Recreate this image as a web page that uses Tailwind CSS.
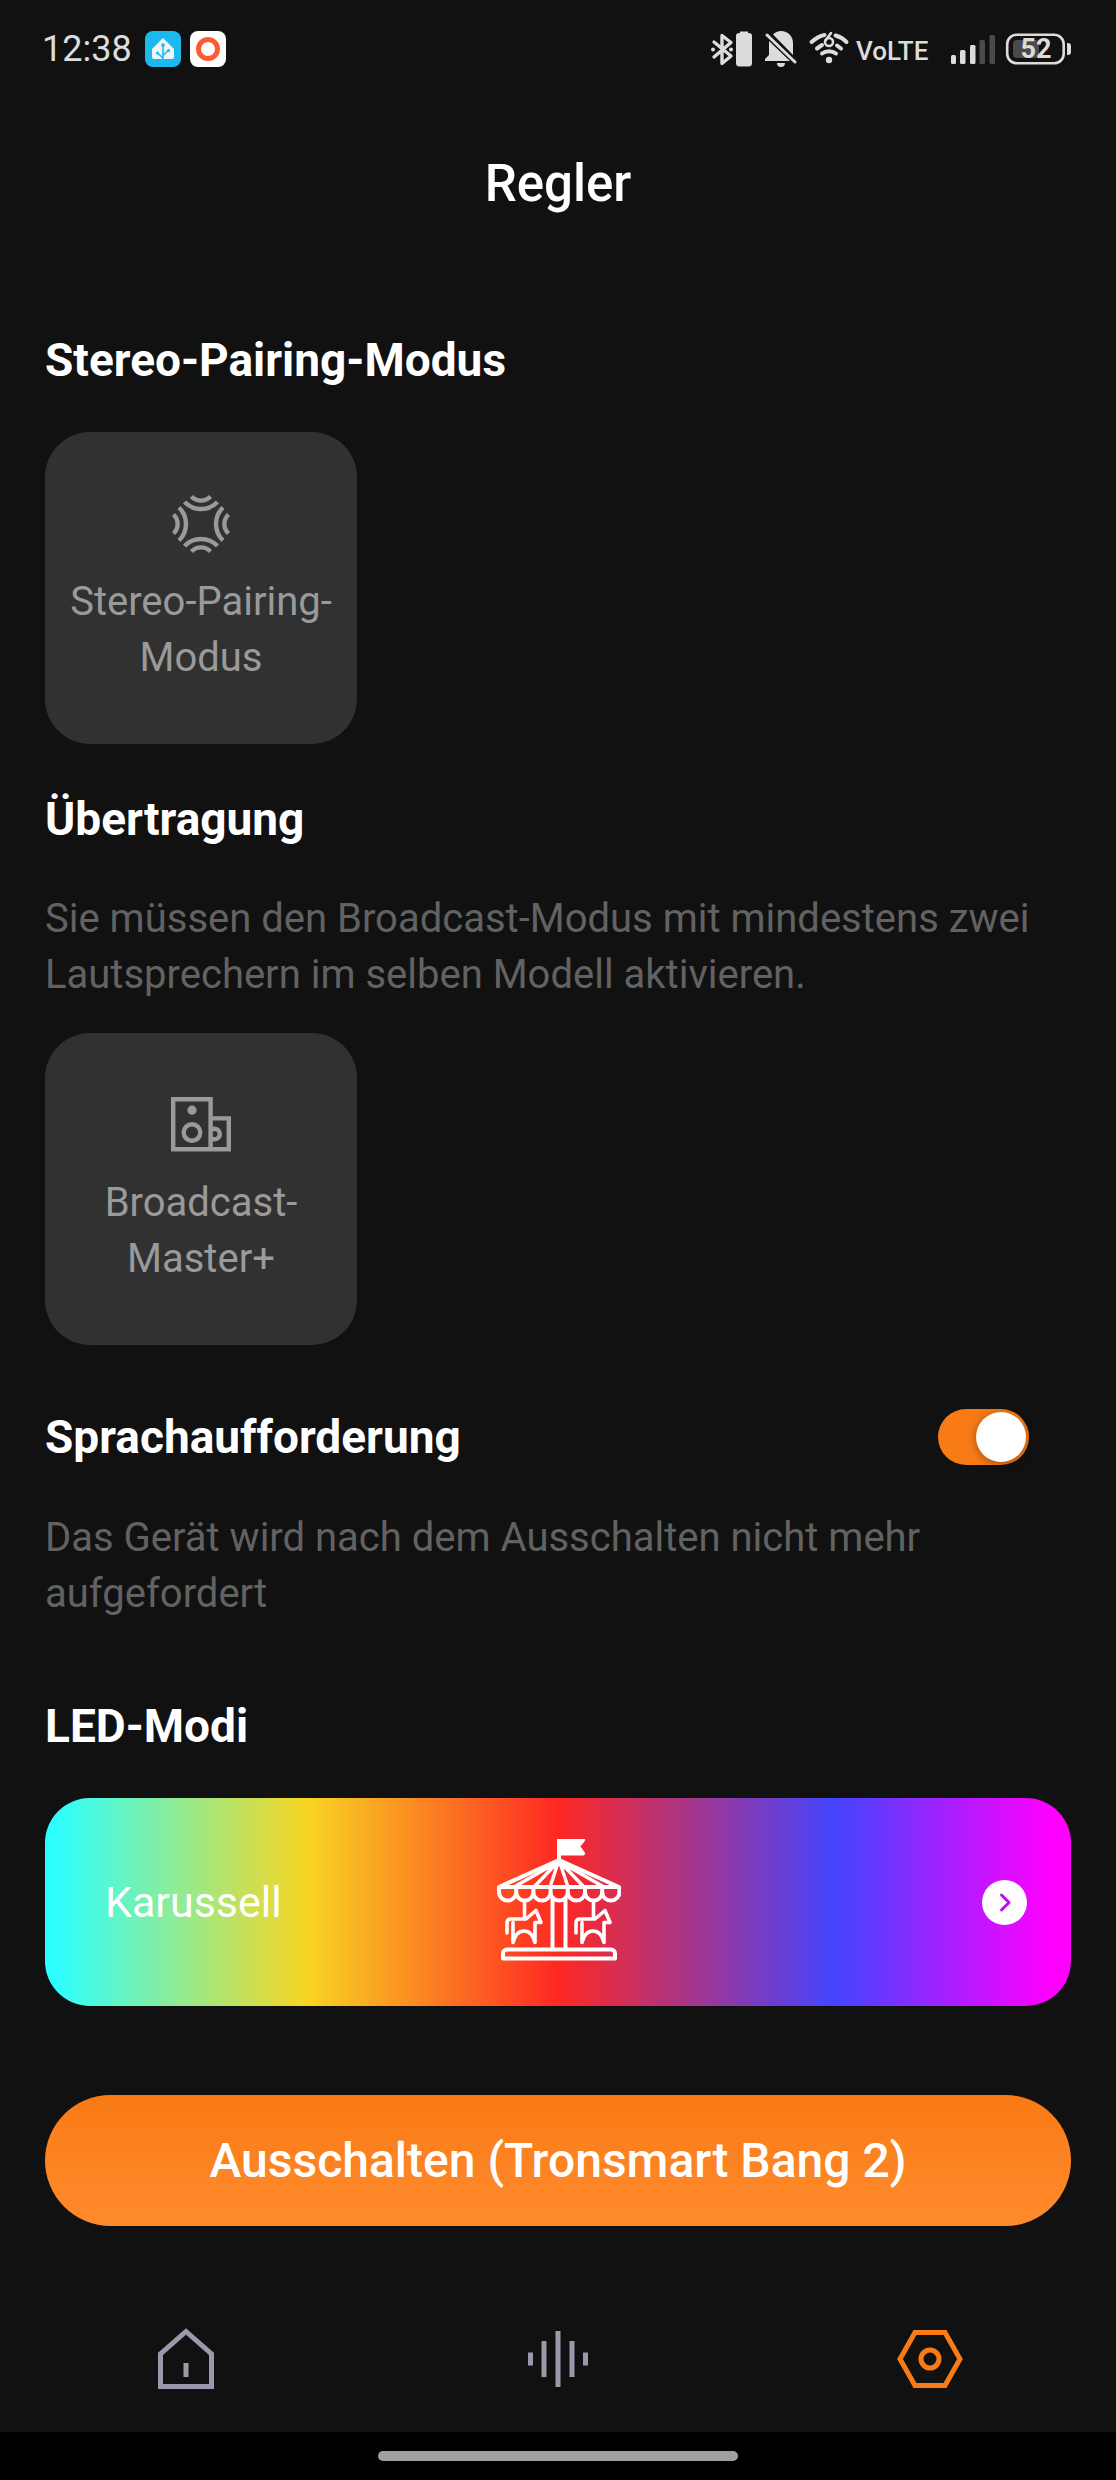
<!DOCTYPE html>
<html lang="de">
<head>
<meta charset="utf-8">
<meta name="viewport" content="width=device-width, initial-scale=1">
<title>Regler</title>
<script src="https://cdn.jsdelivr.net/npm/@tailwindcss/browser@4"></script>
</head>
<body class="min-h-screen flex flex-col bg-[#111111] text-white font-['Roboto',sans-serif]">

<!-- Status bar -->
<div class="flex items-center justify-between h-[98px] pl-[42px] pr-11 text-[#dcdcdc]">
  <div class="flex items-center gap-[9px]">
    <time class="text-[36px] leading-10 mr-1">12:38</time>
    <svg class="w-9 h-9" viewBox="0 0 36 36" aria-hidden="true">
      <rect width="36" height="36" rx="8" fill="#1cb9ef"/>
      <path d="M18 7 29 18v8a2 2 0 0 1-2 2H9a2 2 0 0 1-2-2v-8z" fill="#f1f4f5"/>
      <g stroke="#1cb9ef" stroke-width="1.6" fill="none"><path d="M18 28V14M18 27l-5.500-5M18 24.500l5-4.500"/></g>
      <g fill="#1cb9ef"><circle cx="18" cy="14" r="1.800"/><circle cx="12.500" cy="22" r="1.600"/><circle cx="23.500" cy="19.500" r="1.600"/></g>
    </svg>
    <svg class="w-9 h-9" viewBox="0 0 36 36" aria-hidden="true">
      <rect width="36" height="36" rx="8" fill="#fff"/>
      <circle cx="18" cy="18" r="9.500" fill="none" stroke="#fc5a30" stroke-width="5"/>
    </svg>
  </div>
  <svg class="w-[362px] h-10" viewBox="710 29 362 40" aria-hidden="true" fill="#dcdcdc">
    <path d="M714 42l17 14-9 7.500V35.500l9 7L714 57" fill="none" stroke="#dcdcdc" stroke-width="3.400" stroke-linejoin="round" stroke-linecap="round"/>
    <circle cx="713" cy="49.500" r="2"/><circle cx="731" cy="49.500" r="2"/>
    <path d="M740 33v-1.500h8V33h1a3 3 0 0 1 3 3v27a3.500 3.500 0 0 1-3.500 3.500h-9A3.500 3.500 0 0 1 736 63V36a3 3 0 0 1 3-3z"/>
    <path d="M773 34.500c2-2 5-3.500 8-3.500 7 0 12 5 12 12v12zM769 41l21 20h-25v-2l4-4zM777 63h8a4 4 0 0 1-8 0z"/>
    <path d="M767 35l28 27" stroke="#dcdcdc" stroke-width="3" stroke-linecap="round"/>
    <g fill="none" stroke="#dcdcdc" stroke-width="4" stroke-linecap="round">
      <path d="M811.500 42c4-3.500 8-6 13-7M846.500 42c-3-3-7-5.500-11-6.500M817 48.500l5-3.500M841 48.500l-4-3M822 53.500c4-3 10-3 14 0"/>
      <path d="M831 33l-5 7" stroke-width="2.600"/>
      <circle cx="829" cy="42" r="4" stroke-width="2.600"/>
    </g>
    <circle cx="829" cy="60" r="3.200"/>
    <text x="856" y="60" font-family="Roboto, sans-serif" font-size="26" font-weight="500">VoLTE</text>
    <rect x="951" y="55" width="5" height="9" rx="1.500"/><rect x="960" y="50" width="5.500" height="14" rx="1.500"/><rect x="970" y="45" width="5.500" height="19" rx="1.500"/>
    <g fill="#4a4a4a"><rect x="979.500" y="40" width="5.500" height="24" rx="1.500"/><rect x="989.500" y="35" width="5.500" height="29" rx="1.500"/></g>
    <rect x="1007.200" y="34.700" width="56.500" height="28.600" rx="9.500" fill="none" stroke="#dcdcdc" stroke-width="2.600"/>
    <rect x="1013" y="40" width="26" height="18" rx="4" fill="#4a4a4a"/>
    <path d="M1067 43h1a3 3 0 0 1 3 3v6a3 3 0 0 1-3 3h-1z"/>
    <text x="1036" y="58" text-anchor="middle" font-family="Roboto, sans-serif" font-size="27" font-weight="700">52</text>
  </svg>
</div>

<header class="flex items-center justify-center pt-14 pb-[54px]">
  <h1 class="text-[51px] leading-[60px] font-medium">Regler</h1>
</header>

<main class="flex flex-col px-[45px]">
  <section class="pt-16">
    <h2 class="text-[46px] leading-[56px] font-bold">Stereo-Pairing-Modus</h2>
    <button type="button" class="mt-11 size-[312px] rounded-[45px] bg-[#313131] text-[#9a9a9a] flex flex-col items-center pt-[62px]">
      <svg class="size-[60px]" viewBox="0 0 60 60" fill="none" stroke="#9a9a9a" stroke-width="4.400" aria-hidden="true">
        <path d="M20.500 2.500a13 13 0 0 0 19 0M13.500 8a23 23 0 0 0 33 0"/>
        <path d="M20.500 57.500a13 13 0 0 1 19 0M13.500 52a23 23 0 0 1 33 0"/>
        <path d="M2.500 20.500a13 13 0 0 1 0 19M8 13.500a23 23 0 0 1 0 33"/>
        <path d="M57.500 20.500a13 13 0 0 0 0 19M52 13.500a23 23 0 0 0 0 33"/>
      </svg>
      <span class="mt-5 text-[40px] leading-[56px]">Stereo-Pairing-<br>Modus</span>
    </button>
  </section>

  <section class="pt-[47px]">
    <h2 class="text-[46px] leading-[56px] font-bold">Übertragung</h2>
    <p class="mt-11 text-[40px] leading-[56px] text-[#626262]">Sie müssen den Broadcast-Modus mit mindestens zwei Lautsprechern im selben Modell aktivieren.</p>
    <button type="button" class="mt-[30px] size-[312px] rounded-[45px] bg-[#313131] text-[#9a9a9a] flex flex-col items-center pt-[62px]">
      <svg class="size-[60px]" viewBox="0 0 60 60" fill="none" stroke="#9a9a9a" stroke-width="4.400" aria-hidden="true">
        <path d="M2.200 4.200h37.400v50H2.200zM40 23.400h17.800v30.800H40"/>
        <circle cx="21" cy="37.500" r="8.300"/>
        <path d="M41 34.500a5.200 5.200 0 1 1 0 9"/>
        <circle cx="21" cy="15.200" r="4.600" fill="#9a9a9a" stroke="none"/>
      </svg>
      <span class="mt-5 text-[40px] leading-[56px]">Broadcast-<br>Master+</span>
    </button>
  </section>

  <section class="pt-16">
    <div class="flex items-center justify-between pr-[42px]">
      <h2 class="text-[46px] leading-[56px] font-bold"><label for="voice">Sprachaufforderung</label></h2>
      <input id="voice" type="checkbox" role="switch" checked class="appearance-none flex items-center w-[91px] h-14 p-[3px] rounded-full bg-[#555] checked:bg-[#f97b16] checked:justify-end before:size-[50px] before:rounded-full before:bg-white before:shadow-[0_2px_10px_rgba(0,0,0,0.35)]">
    </div>
    <p class="mt-[45px] text-[40px] leading-[56px] text-[#626262]">Das Gerät wird nach dem Ausschalten nicht mehr aufgefordert</p>
  </section>

  <section class="pt-[76px]">
    <h2 class="text-[46px] leading-[56px] font-bold">LED-Modi</h2>
    <button type="button" class="mt-11 w-full h-[208px] rounded-[45px] grid grid-cols-3 items-center px-11 bg-[linear-gradient(90deg,#2dffff_1%,#f8d622_25.5%,#ff2822_50%,#4444ff_77%,#ff00ff_98%)]">
      <span class="pl-4 text-left text-[43px] leading-[56px]">Karussell</span>
      <svg class="justify-self-center w-[126px] h-[126px]" viewBox="495 1838 126 126" fill="none" stroke="#fff" stroke-width="4" stroke-linejoin="round" stroke-linecap="round" aria-hidden="true">
        <path d="M559 1837v22"/>
        <path d="M559 1839h24l-5 6.500 5 7h-24z" fill="#fff"/>
        <path d="M559 1859l-60 27h120z"/>
        <path d="M556 1862l-42 24M557 1862l-23 24M558 1862l-8 24M560 1862l8 24M561 1862l23 24M562 1862l42 24" stroke-width="3.400"/>
        <path d="M499 1887v4a8.600 8.600 0 0 0 17.200 0v-4m0 4a8.600 8.600 0 0 0 17.200 0v-4m0 4a8.600 8.600 0 0 0 17.200 0v-4m0 4a8.600 8.600 0 0 0 17.200 0v-4m0 4a8.600 8.600 0 0 0 17.200 0v-4m0 4a8.600 8.600 0 0 0 17.200 0v-4m0 4a8.600 8.600 0 0 0 17.200 0v-4"/>
        <path d="M552.500 1898v50M565.500 1898v50"/>
        <path d="M503 1957.500v-5a4 4 0 0 1 4-4h104a4 4 0 0 1 4 4v5z"/>
        <g id="horse" stroke-width="3.600"><path d="M524.500 1901v15M507 1932v-10q0-4 4-4h15l10-8.500 5 12h-6v20q-3-11.500-11-11.500t-11 11.500v-20"/></g>
        <use href="#horse" x="69"/>
      </svg>
      <svg class="justify-self-end size-[45px]" viewBox="0 0 45 45" aria-hidden="true">
        <circle cx="22.500" cy="22.500" r="22.500" fill="#fff"/>
        <path d="M19.500 15l7.500 7.500-7.500 7.500" fill="none" stroke="#c010e8" stroke-width="3" stroke-linecap="round" stroke-linejoin="round"/>
      </svg>
    </button>
  </section>

  <button type="button" class="mt-[89px] w-full h-[131px] rounded-full bg-linear-to-b from-[#f97a14] to-[#ff8b2c] text-[48px] leading-[56px] font-medium">Ausschalten (Tronsmart Bang 2)</button>
</main>

<nav class="mt-auto grid grid-cols-3 items-center h-[146px]" aria-label="Navigation">
  <a href="#home" aria-label="Start" class="justify-self-center"><svg class="size-[72px]" viewBox="0 0 72 72" fill="none" stroke="#9c98ab" stroke-width="5"><path d="M10.500 63.500V31L36 8.500 61.500 31v32.500z"/><path d="M36 40v14"/></svg></a>
  <a href="#eq" aria-label="Equalizer" class="justify-self-center"><svg class="size-[72px]" viewBox="0 0 72 72" fill="none" stroke="#9c98ab" stroke-width="5"><path d="M8.500 29.500v13M22 18v36M36 8v56M50 18v36M63.500 29.500v13"/></svg></a>
  <a href="#settings" aria-label="Regler" aria-current="page" class="justify-self-center"><svg class="size-[72px]" viewBox="0 0 72 72" fill="none" stroke="#f97b16" stroke-width="5"><path d="M6 36 21 9.500h30L66 36 51 62.500H21z"/><circle cx="36" cy="36" r="9"/></svg></a>
</nav>
<div class="flex items-center justify-center h-12 bg-black"><div class="w-[360px] h-[10px] rounded-full bg-[#a0a0a0]"></div></div>
</body>
</html>
